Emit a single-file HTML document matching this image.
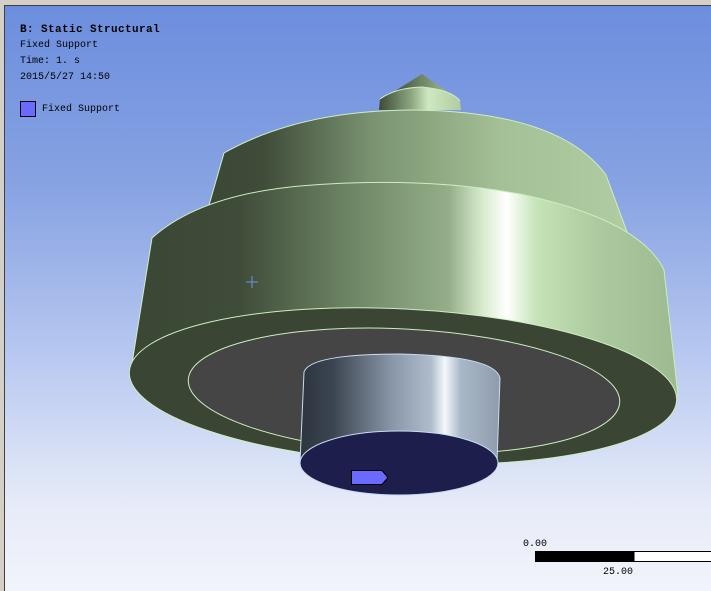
<!DOCTYPE html>
<html><head><meta charset="utf-8"><style>
html,body{margin:0;padding:0;width:711px;height:591px;overflow:hidden}
body{position:relative;background:#d4d0c8}
#vp{position:absolute;left:4px;top:5px;width:707px;height:586px;background:linear-gradient(#6c8ede 0%,#86a2e2 30%,#b8c8f0 60%,#e6ebf8 85%,#f2f4fb 100%);border-left:1px solid #404040;border-top:1px solid #404040;box-sizing:border-box}
svg{position:absolute;left:0;top:0}
.t{position:absolute;font-family:"Liberation Mono",monospace;font-size:10px;color:#000;white-space:pre;line-height:12px}
</style></head><body>
<div id="vp"></div>
<svg width="711" height="591" viewBox="0 0 711 591">
<defs>
<linearGradient id="g" x1="130" x2="680" y1="0" y2="0" gradientUnits="userSpaceOnUse">
<stop offset="0" stop-color="#3b4735"/><stop offset="0.2" stop-color="#3f4c39"/><stop offset="0.4" stop-color="#6e8565"/>
<stop offset="0.58" stop-color="#95ae89"/><stop offset="0.64" stop-color="#d6ebcc"/><stop offset="0.685" stop-color="#ffffff"/>
<stop offset="0.74" stop-color="#c4e3b6"/><stop offset="0.85" stop-color="#acc99f"/><stop offset="1" stop-color="#9db98f"/></linearGradient>
<linearGradient id="g2" x1="199" x2="630" y1="0" y2="0" gradientUnits="userSpaceOnUse">
<stop offset="0" stop-color="#3b4735"/><stop offset="0.15" stop-color="#3f4c39"/><stop offset="0.4" stop-color="#7a9270"/>
<stop offset="0.7" stop-color="#a4c096"/><stop offset="1" stop-color="#b0cca2"/></linearGradient>
<linearGradient id="g3" x1="379" x2="461" y1="0" y2="0" gradientUnits="userSpaceOnUse">
<stop offset="0" stop-color="#3d4a37"/><stop offset="0.4" stop-color="#8ea882"/><stop offset="0.6" stop-color="#cfe8c2"/><stop offset="1" stop-color="#b0cca2"/></linearGradient>
<linearGradient id="g5" x1="392" x2="452" y1="0" y2="0" gradientUnits="userSpaceOnUse">
<stop offset="0" stop-color="#3d4a37"/><stop offset="0.6" stop-color="#7a9270"/><stop offset="1" stop-color="#a4c096"/></linearGradient>
<linearGradient id="g4" x1="303" x2="500" y1="0" y2="0" gradientUnits="userSpaceOnUse">
<stop offset="0" stop-color="#2e3740"/><stop offset="0.15" stop-color="#3b4450"/><stop offset="0.45" stop-color="#8896a8"/>
<stop offset="0.65" stop-color="#aebccc"/><stop offset="0.72" stop-color="#f4f8fc"/><stop offset="0.8" stop-color="#a9b8c8"/><stop offset="1" stop-color="#8e9cad"/></linearGradient>
</defs>
<!-- nub -->
<path d="M422,74 L452,95 Q420,84 392,93 Z" fill="url(#g5)"/>
<path d="M379,110 L380,99 Q395,88 422,87 Q452,90 460,101 L461,110 Z" fill="url(#g3)"/>
<path d="M380,99 Q395,88 422,87 Q452,90 460,101" fill="none" stroke="#cdeec0" stroke-width="1"/>
<!-- upper tier -->
<path d="M224,153 Q300,110 415,110 Q560,112 606,175 L630,240 L199,240 Z" fill="url(#g2)" stroke="#cdeec0" stroke-width="1"/>
<!-- lower tier side -->
<path d="M152,238 Q200,195 300,186 Q420,176 520,194 Q640,220 664,270 L678,395 L131,370 Z" fill="url(#g)" stroke="#cdeec0" stroke-width="1"/>
<!-- bottom face -->
<ellipse cx="403" cy="386" rx="274" ry="77" fill="#3a4533" stroke="#cdeec0" stroke-width="1" transform="rotate(3 403 386)"/>
<ellipse cx="404" cy="391" rx="216" ry="62" fill="#454545" stroke="#cdeec0" stroke-width="1" transform="rotate(3 404 391)"/>
<!-- small cylinder -->
<path d="M304,372 Q310,354 400,354 Q495,356 500,378 L497,463 L300,463 Z" fill="url(#g4)" stroke="#c8dcf0" stroke-width="1"/>
<ellipse cx="399" cy="463" rx="99" ry="32" fill="#1e1e4c" stroke="#c8dcf0" stroke-width="1"/>
<path d="M351.5,470.5 L382,470.5 L388,477.5 L382,484.5 L351.5,484.5 Z" fill="#6a6aff" stroke="#000" stroke-width="1"/>
<!-- cross -->
<path d="M252,276 V288 M246,282 H258" stroke="#7090e0" stroke-width="1"/>
<!-- legend box -->
<rect x="20.5" y="101.5" width="15" height="15" fill="#6a6aff" stroke="#000"/>
<!-- scale -->
<rect x="535" y="551" width="99" height="11" fill="#000"/>
<rect x="634" y="551.5" width="80" height="10" fill="#fff" stroke="#000"/>
</svg>
<div class="t" style="left:20px;top:24px;font-weight:bold;font-size:11px;letter-spacing:0.4px">B: Static Structural</div>
<div class="t" style="left:20px;top:40px">Fixed Support</div>
<div class="t" style="left:20px;top:56px">Time: 1. s</div>
<div class="t" style="left:20px;top:72px">2015/5/27 14:50</div>
<div class="t" style="left:42px;top:104px">Fixed Support</div>
<div class="t" style="left:523px;top:539px">0.00</div>
<div class="t" style="left:603px;top:567px">25.00</div>
</body></html>
